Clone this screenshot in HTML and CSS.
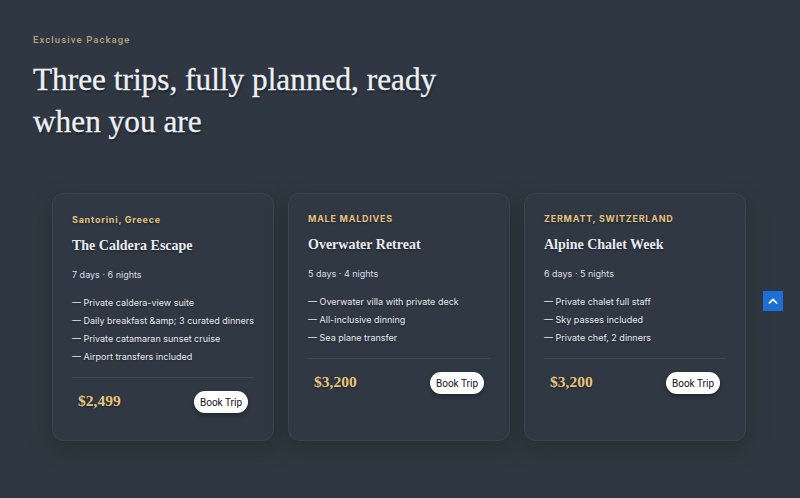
FILE: index.html
```html
<!DOCTYPE html>
<html>
<head>
<meta charset="utf-8">
<link rel="stylesheet" href="styles.css">
</head>
<body>
<main class="page">
  <header class="intro">
    <p class="eyebrow">Exclusive Package</p>
    <h1 class="headline">Three trips, fully planned, ready when you are</h1>
  </header>
  <section class="cards">
    <article class="card card-first">
      <p class="place">Santorini, Greece</p>
      <h2 class="title">The Caldera Escape</h2>
      <p class="duration">7 days · 6 nights</p>
      <ul class="features">
        <li>— Private caldera-view suite</li>
        <li>— Daily breakfast &amp;amp; 3 curated dinners</li>
        <li>— Private catamaran sunset cruise</li>
        <li>— Airport transfers included</li>
      </ul>
      <div class="price-row">
        <span class="price">$2,499</span>
        <button class="book">Book Trip</button>
      </div>
    </article>
    <article class="card">
      <p class="place">MALE MALDIVES</p>
      <h2 class="title">Overwater Retreat</h2>
      <p class="duration">5 days · 4 nights</p>
      <ul class="features">
        <li>— Overwater villa with private deck</li>
        <li>— All-inclusive dinning</li>
        <li>— Sea plane transfer</li>
      </ul>
      <div class="price-row">
        <span class="price">$3,200</span>
        <button class="book">Book Trip</button>
      </div>
    </article>
    <article class="card">
      <p class="place">ZERMATT, SWITZERLAND</p>
      <h2 class="title">Alpine Chalet Week</h2>
      <p class="duration">6 days · 5 nights</p>
      <ul class="features">
        <li>— Private chalet full staff</li>
        <li>— Sky passes included</li>
        <li>— Private chef, 2 dinners</li>
      </ul>
      <div class="price-row">
        <span class="price">$3,200</span>
        <button class="book">Book Trip</button>
      </div>
    </article>
  </section>
</main>
<a class="to-top" href="#" aria-label="Back to top">
  <svg width="10" height="10" viewBox="0 0 10 10"><path d="M1.5 6.8 L5 3.3 L8.5 6.8" fill="none" stroke="#fff" stroke-width="1.8" stroke-linecap="round" stroke-linejoin="round"/></svg>
</a>
</body>
</html>
```

FILE: styles.css
```css
* { box-sizing: border-box; }
html, body { margin: 0; padding: 0; }
body {
  background: #2f3842;
  width: 800px;
  height: 498px;
  overflow: hidden;
  font-family: "Inter", "Roboto", "Liberation Sans", sans-serif;
}
.page {
  padding: 34px 0 0 0;
}
.intro {
  padding: 0 33px;
}
.eyebrow {
  margin: 0;
  font-family: "Roboto", "Liberation Sans", sans-serif;
  font-size: 9.5px;
  font-weight: 500;
  letter-spacing: 1.1px;
  color: #b9a27a;
  line-height: 12px;
}
.headline {
  margin: 13px 0 0 0;
  max-width: 440px;
  font-family: "Liberation Serif", "DejaVu Serif", serif;
  font-weight: 400;
  font-size: 31.3px;
  line-height: 42px;
  color: #eef0f6;
  text-shadow: 1px 2px 2px rgba(0,0,0,0.45);
  -webkit-text-stroke: 0.3px #eef0f6;
}
.cards {
  margin-top: 50px;
  display: flex;
  gap: 14px;
  padding-left: 52px;
  align-items: stretch;
}
.card {
  width: 222px;
  min-height: 248px;
  background: #2f3843;
  border: 1px solid rgba(255,255,255,0.06);
  border-radius: 12px;
  box-shadow: 0 8px 24px rgba(0,0,0,0.22);
  padding: 19px 19px 26px 19px;
  display: flex;
  flex-direction: column;
}
.card-first { padding-top: 20px; }
.place {
  margin: 0;
  font-size: 9px;
  font-weight: 700;
  letter-spacing: 0.75px;
  line-height: 12px;
  color: #e7c27c;
  text-shadow: 0 1px 2px rgba(0,0,0,0.4);
}
.title {
  margin: 11px 0 0 0;
  font-family: "Liberation Serif", "DejaVu Serif", serif;
  font-weight: 700;
  font-size: 14px;
  line-height: 18px;
  color: #e9ebf0;
  text-shadow: 0 1px 2px rgba(0,0,0,0.45);
}
.duration {
  margin: 13px 0 0 0;
  font-size: 9px;
  line-height: 14px;
  color: #dadde3;
}
.features {
  list-style: none;
  margin: 12px 0 0 0;
  padding: 0;
  font-size: 9px;
  line-height: 18px;
  color: #e8eaee;
  white-space: nowrap;
  text-shadow: 0 1px 2px rgba(0,0,0,0.35);
}
.price-row {
  margin-top: 11px;
  border-top: 1px solid rgba(255,255,255,0.08);
  padding: 13px 6px 0 6px;
  display: flex;
  justify-content: space-between;
  align-items: center;
}
.price {
  font-family: "Liberation Serif", "DejaVu Serif", serif;
  font-weight: 700;
  font-size: 15.5px;
  color: #e9c47d;
  text-shadow: 0 1px 2px rgba(0,0,0,0.4);
  margin-top: -2px;
}
.book {
  font-family: "Roboto", "Liberation Sans", sans-serif;
  font-size: 10px;
  color: #111;
  background: #fff;
  border: none;
  border-radius: 11px;
  height: 22px;
  padding: 0 6px;
  box-shadow: 0 2px 4px rgba(0,0,0,0.35);
}
.to-top {
  position: fixed;
  left: 763px;
  top: 291px;
  width: 20px;
  height: 20px;
  background: #1b6fd5;
  display: flex;
  align-items: center;
  justify-content: center;
}
```
